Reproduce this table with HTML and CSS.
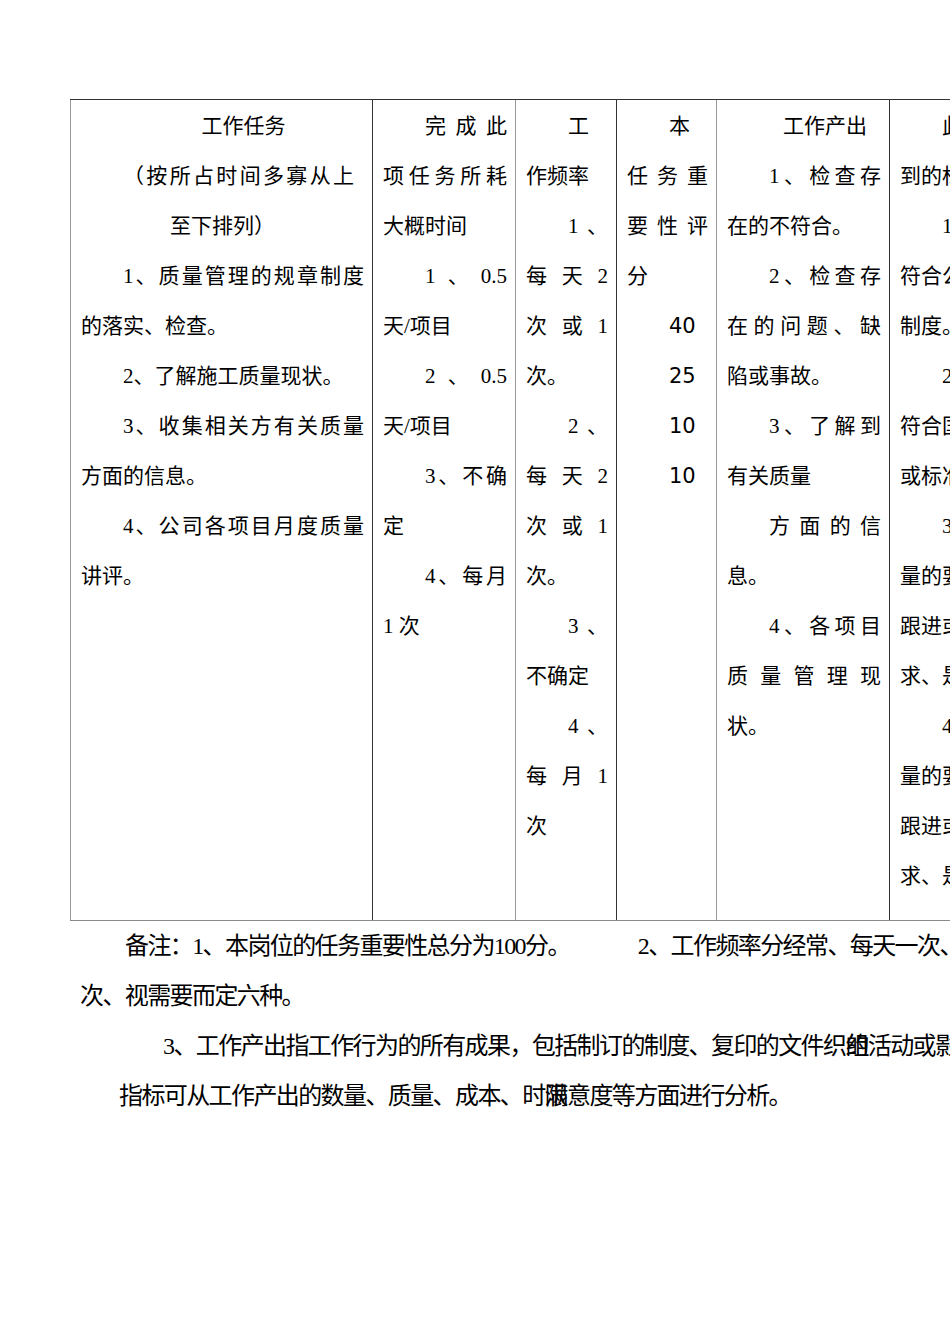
FILE: index.html
```html
<!DOCTYPE html>
<html lang="zh-CN">
<head>
<meta charset="utf-8">
<title>岗位说明</title>
<link rel="stylesheet" href="styles.css">
</head>
<body>
<div class="sheet">
  <div class="grid">
    <div class="cell">
      <div class="ln c i">工作任务</div>
      <div class="ln j i wide">（按所占时间多寡从上</div>
      <div class="ln c">至下排列）</div>
      <div class="ln j i">1、质量管理的规章制度</div>
      <div class="ln">的落实、检查。</div>
      <div class="ln i">2、了解施工质量现状。</div>
      <div class="ln j i">3、收集相关方有关质量</div>
      <div class="ln">方面的信息。</div>
      <div class="ln j i">4、公司各项目月度质量</div>
      <div class="ln">讲评。</div>
    </div>
    <div class="cell dark">
      <div class="ln j i">完成此</div>
      <div class="ln j">项任务所耗</div>
      <div class="ln">大概时间</div>
      <div class="ln j i">1、0.5</div>
      <div class="ln">天/项目</div>
      <div class="ln j i">2、0.5</div>
      <div class="ln">天/项目</div>
      <div class="ln j i">3、不确</div>
      <div class="ln">定</div>
      <div class="ln j i">4、每月</div>
      <div class="ln">1 次</div>
    </div>
    <div class="cell">
      <div class="ln i">工</div>
      <div class="ln">作频率</div>
      <div class="ln j i">1、</div>
      <div class="ln j">每天2</div>
      <div class="ln j">次或1</div>
      <div class="ln">次。</div>
      <div class="ln j i">2、</div>
      <div class="ln j">每天2</div>
      <div class="ln j">次或1</div>
      <div class="ln">次。</div>
      <div class="ln j i">3、</div>
      <div class="ln">不确定</div>
      <div class="ln j i">4、</div>
      <div class="ln j">每月1</div>
      <div class="ln">次</div>
    </div>
    <div class="cell dark">
      <div class="ln i">本</div>
      <div class="ln j">任务重</div>
      <div class="ln j">要性评</div>
      <div class="ln">分</div>
      <div class="ln i num">40</div>
      <div class="ln i num">25</div>
      <div class="ln i num">10</div>
      <div class="ln i num">10</div>
    </div>
    <div class="cell">
      <div class="ln c i">工作产出</div>
      <div class="ln j i">1、检查存</div>
      <div class="ln">在的不符合。</div>
      <div class="ln j i">2、检查存</div>
      <div class="ln j">在的问题、缺</div>
      <div class="ln">陷或事故。</div>
      <div class="ln j i">3、了解到</div>
      <div class="ln">有关质量</div>
      <div class="ln j i">方面的信</div>
      <div class="ln">息。</div>
      <div class="ln j i">4、各项目</div>
      <div class="ln j">质量管理现</div>
      <div class="ln">状。</div>
    </div>
    <div class="cell dark">
      <div class="ln j i">此项工作应</div>
      <div class="ln">到的标准</div>
      <div class="ln i">1、完全</div>
      <div class="ln">符合公司质量</div>
      <div class="ln">制度。</div>
      <div class="ln i">2、完全</div>
      <div class="ln">符合国家规范</div>
      <div class="ln">或标准要求。</div>
      <div class="ln i">3、对质</div>
      <div class="ln">量的要求进行</div>
      <div class="ln">跟进或整改要</div>
      <div class="ln">求、是否达标。</div>
      <div class="ln i">4、对安</div>
      <div class="ln">量的要求进行</div>
      <div class="ln">跟进或整改要</div>
      <div class="ln">求、是否达标。</div>
    </div>
  </div>
  <div class="notes">
    <p class="nl n1">备注：1、本岗位的任务重要性总分为100分。<span class="gap"></span>2、工作频率分经常、每天一次、每周一次、每月一次、</p>
    <p class="nl">次、视需要而定六种。</p>
    <p class="nl n3">3、工作产出指工作行为的所有成果，包括制订的制度、复印的文件织<span class="ov">组</span>的活动或影响等。</p>
    <p class="nl n4">指标可从工作产出的数量、质量、成本、时<span class="ov">限</span>满意度等方面进行分析。</p>
  </div>
</div>
</body>
</html>
```
FILE: styles.css
```css
html, body {
  margin: 0;
  padding: 0;
  background: #fff;
  overflow: hidden;
}

.sheet {
  width: 950px;
  height: 1344px;
  box-sizing: border-box;
  padding: 99px 0 0 0;
  overflow: hidden;
  color: #000;
  font-family: "Liberation Serif", "Noto Sans CJK SC", serif;
}

.grid {
  display: grid;
  grid-template-columns: 302px 143px 101px 100px 173px 173px;
  width: max-content;
  margin-left: 70px;
  border-top: 1px solid #333;
  border-bottom: 1px solid #8a8a8a;
}

.cell {
  border-left: 1px solid #999;
  padding: 1px 8px 19px 10px;
  font-size: 21px;
  min-width: 0;
}

.cell.dark {
  border-left-color: #333;
}

.ln {
  height: 50px;
  line-height: 50px;
  text-align: left;
  white-space: nowrap;
  overflow: visible;
}

.ln.i {
  padding-left: 2em;
}

.ln.j {
  white-space: normal;
  text-align: justify;
  text-align-last: justify;
}

.ln.c {
  text-align: center;
}

.ln.wide {
  padding-right: 10px;
}

.num {
  font-family: "DejaVu Sans", "Noto Sans", sans-serif;
}

.notes {
  padding-left: 80px;
  font-size: 24px;
  letter-spacing: -1.6px;
}

.nl {
  margin: 0;
  height: 50px;
  line-height: 50px;
  white-space: nowrap;
}

.n1 {
  padding-left: 45px;
}

.n3 {
  padding-left: 83px;
}

.n4 {
  padding-left: 39px;
}

.gap {
  display: inline-block;
  width: 68px;
}

.ov {
  display: inline-block;
  width: 0;
  overflow: visible;
}
```
